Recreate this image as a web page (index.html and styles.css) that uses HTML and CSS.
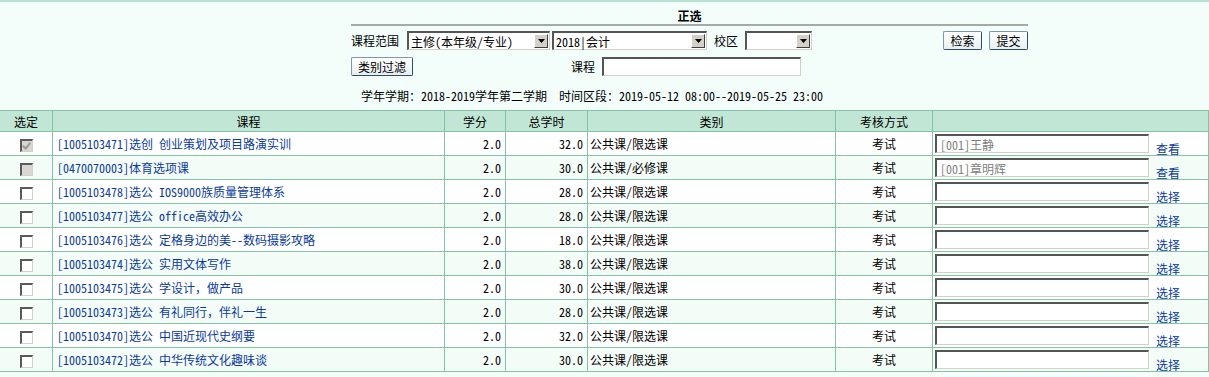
FILE: index.html
```html
<!DOCTYPE html>
<html lang="zh-CN">
<head>
    <meta charset="UTF-8">
    <title>正选</title>
    <link rel="stylesheet" href="styles.css">
</head>
<body>
    <div class="topline"></div>
    <div class="filter">
        <div class="title">正选</div>
        <div class="row">
            <span class="label">课程范围</span>
            <div class="select w1"><span class="val">主修(本年级/专业)</span><span class="arrow"><svg width="7" height="4" viewBox="0 0 7 4"><path d="M0 0h7L3.5 4z" fill="#000"/></svg></span></div>
            <div class="select w2"><span class="val">2018|会计</span><span class="arrow"><svg width="7" height="4" viewBox="0 0 7 4"><path d="M0 0h7L3.5 4z" fill="#000"/></svg></span></div>
            <span class="label campus">校区</span>
            <div class="select w3"><span class="val"></span><span class="arrow"><svg width="7" height="4" viewBox="0 0 7 4"><path d="M0 0h7L3.5 4z" fill="#000"/></svg></span></div>
            <div class="btns">
                <button class="btn">检索</button>
                <button class="btn">提交</button>
            </div>
        </div>
        <div class="row row2">
            <button class="btn filter-btn">类别过滤</button>
            <span class="label course-label">课程</span>
            <input class="text course-input" type="text">
        </div>
        <p class="term">学年学期：2018-2019学年第二学期&nbsp;&nbsp;时间区段：2019-05-12 08:00--2019-05-25 23:00</p>
    </div>

    <table class="courses">
        <thead>
            <tr>
                <th class="c-sel">选定</th>
                <th class="c-name">课程</th>
                <th class="c-credit">学分</th>
                <th class="c-hours">总学时</th>
                <th class="c-type">类别</th>
                <th class="c-exam">考核方式</th>
                <th class="c-teacher"></th>
            </tr>
        </thead>
        <tbody>
            <tr>
                <td class="center"><input type="checkbox" class="chk" checked disabled></td>
                <td><a href="#">[1005103471]选创 创业策划及项目路演实训</a></td>
                <td class="num">2.0</td>
                <td class="num">32.0</td>
                <td>公共课/限选课</td>
                <td class="center">考试</td>
                <td><div class="pick"><input class="text teacher" type="text" value="[001]王静" readonly><a href="#">查看</a></div></td>
            </tr>
            <tr>
                <td class="center"><input type="checkbox" class="chk" disabled></td>
                <td><a href="#">[0470070003]体育选项课</a></td>
                <td class="num">2.0</td>
                <td class="num">30.0</td>
                <td>公共课/必修课</td>
                <td class="center">考试</td>
                <td><div class="pick"><input class="text teacher" type="text" value="[001]章明辉" readonly><a href="#">查看</a></div></td>
            </tr>
            <tr>
                <td class="center"><input type="checkbox" class="chk"></td>
                <td><a href="#">[1005103478]选公 IOS9000族质量管理体系</a></td>
                <td class="num">2.0</td>
                <td class="num">28.0</td>
                <td>公共课/限选课</td>
                <td class="center">考试</td>
                <td><div class="pick"><input class="text teacher" type="text"><a href="#">选择</a></div></td>
            </tr>
            <tr>
                <td class="center"><input type="checkbox" class="chk"></td>
                <td><a href="#">[1005103477]选公 office高效办公</a></td>
                <td class="num">2.0</td>
                <td class="num">28.0</td>
                <td>公共课/限选课</td>
                <td class="center">考试</td>
                <td><div class="pick"><input class="text teacher" type="text"><a href="#">选择</a></div></td>
            </tr>
            <tr>
                <td class="center"><input type="checkbox" class="chk"></td>
                <td><a href="#">[1005103476]选公 定格身边的美--数码摄影攻略</a></td>
                <td class="num">2.0</td>
                <td class="num">18.0</td>
                <td>公共课/限选课</td>
                <td class="center">考试</td>
                <td><div class="pick"><input class="text teacher" type="text"><a href="#">选择</a></div></td>
            </tr>
            <tr>
                <td class="center"><input type="checkbox" class="chk"></td>
                <td><a href="#">[1005103474]选公 实用文体写作</a></td>
                <td class="num">2.0</td>
                <td class="num">38.0</td>
                <td>公共课/限选课</td>
                <td class="center">考试</td>
                <td><div class="pick"><input class="text teacher" type="text"><a href="#">选择</a></div></td>
            </tr>
            <tr>
                <td class="center"><input type="checkbox" class="chk"></td>
                <td><a href="#">[1005103475]选公 学设计，做产品</a></td>
                <td class="num">2.0</td>
                <td class="num">30.0</td>
                <td>公共课/限选课</td>
                <td class="center">考试</td>
                <td><div class="pick"><input class="text teacher" type="text"><a href="#">选择</a></div></td>
            </tr>
            <tr>
                <td class="center"><input type="checkbox" class="chk"></td>
                <td><a href="#">[1005103473]选公 有礼同行，伴礼一生</a></td>
                <td class="num">2.0</td>
                <td class="num">28.0</td>
                <td>公共课/限选课</td>
                <td class="center">考试</td>
                <td><div class="pick"><input class="text teacher" type="text"><a href="#">选择</a></div></td>
            </tr>
            <tr>
                <td class="center"><input type="checkbox" class="chk"></td>
                <td><a href="#">[1005103470]选公 中国近现代史纲要</a></td>
                <td class="num">2.0</td>
                <td class="num">32.0</td>
                <td>公共课/限选课</td>
                <td class="center">考试</td>
                <td><div class="pick"><input class="text teacher" type="text"><a href="#">选择</a></div></td>
            </tr>
            <tr>
                <td class="center"><input type="checkbox" class="chk"></td>
                <td><a href="#">[1005103472]选公 中华传统文化趣味谈</a></td>
                <td class="num">2.0</td>
                <td class="num">30.0</td>
                <td>公共课/限选课</td>
                <td class="center">考试</td>
                <td><div class="pick"><input class="text teacher" type="text"><a href="#">选择</a></div></td>
            </tr>
        </tbody>
    </table>
</body>
</html>
```

FILE: styles.css
```css
body {
    margin: 0;
    background-color: #f3fefa;
    font-family: "Noto Sans Mono CJK SC", "Noto Sans CJK SC", "DejaVu Sans Mono", monospace;
    font-size: 12px;
    color: #000;
}

.topline {
    height: 2px;
    background-color: #b6e3d1;
}

.filter {
    margin-left: 351px;
    width: 677px;
}

.title {
    height: 22px;
    line-height: 28px;
    text-align: center;
    font-weight: bold;
    border-bottom: 2px solid #a5a9a8;
}

.row {
    display: flex;
    align-items: center;
    height: 19px;
    margin-top: 5px;
}

.row2 {
    margin-top: 7px;
}

.label {
    margin-right: 8px;
}

.campus {
    margin-left: 5px;
    margin-right: 7px;
}

.select {
    display: flex;
    align-items: center;
    height: 19px;
    box-sizing: border-box;
    background: #fff;
    border-top: 2px solid #555;
    border-left: 2px solid #555;
    border-right: 1px solid #d4d0c8;
    border-bottom: 1px solid #d4d0c8;
    margin-right: 2px;
}

.select .val {
    flex: 1;
    padding-left: 2px;
    white-space: nowrap;
    overflow: hidden;
}

.select .arrow {
    width: 14px;
    height: 14px;
    box-sizing: border-box;
    background: #d4d0c8;
    border-top: 1px solid #fff;
    border-left: 1px solid #fff;
    border-right: 1px solid #404040;
    border-bottom: 1px solid #404040;
    display: flex;
    align-items: center;
    justify-content: center;
    margin-right: 1px;
}

.w1 { width: 143px; }
.w2 { width: 155px; }
.w3 { width: 67px; }

.btns {
    margin-left: auto;
    display: flex;
    gap: 7px;
}

.btn {
    font-family: inherit;
    font-size: 12px;
    width: 39px;
    height: 19px;
    padding: 0;
    background: linear-gradient(#ffffff, #e8eef0);
    border: 1px solid #7d97a3;
    border-right-color: #2b4f5f;
    border-bottom-color: #2b4f5f;
    border-radius: 2px;
    line-height: 15px;
    cursor: pointer;
}

.filter-btn {
    width: 62px;
}

.course-label {
    margin-left: 158px;
    margin-right: 7px;
}

.text {
    font-family: inherit;
    font-size: 12px;
    height: 19px;
    box-sizing: border-box;
    padding: 0 3px;
    background: #fff;
    border-top: 2px solid #555;
    border-left: 2px solid #555;
    border-right: 1px solid #d4d0c8;
    border-bottom: 1px solid #d4d0c8;
    outline: none;
}

.course-input {
    width: 199px;
}

.term {
    margin: 12px 0 0 10px;
    height: 22px;
    line-height: 16px;
}

.courses {
    width: 100%;
    border-collapse: collapse;
    table-layout: fixed;
}

.courses th {
    background-color: #c1e6d5;
    font-weight: normal;
    height: 20px;
    padding: 0;
    border: 1px solid #84c4a6;
}

.courses td {
    height: 23px;
    padding: 0 4px;
    border: 1px solid #84c4a6;
    white-space: nowrap;
}

.courses th:first-child,
.courses td:first-child {
    border-left: none;
}

.courses tbody tr:nth-child(odd) {
    background-color: #fff;
}

.courses tbody tr:nth-child(even) {
    background-color: #f3fcf7;
}

.c-sel { width: 52px; }
.c-name { width: 391px; }
.c-credit { width: 60px; }
.c-hours { width: 81px; }
.c-type { width: 247px; }
.c-exam { width: 96px; }

.center { text-align: center; }

.num {
    text-align: right;
}

.courses td:nth-child(5) {
    padding-left: 2px;
}

a {
    color: #0b3a9c;
    text-decoration: none;
}

.pick {
    display: flex;
    align-items: flex-end;
    margin-left: -2px;
}

.teacher {
    width: 214px;
    color: #808080;
}

.pick a {
    margin-left: 7px;
    line-height: 13px;
    margin-bottom: -2px;
}

.chk {
    appearance: none;
    width: 13px;
    height: 13px;
    margin: 0;
    vertical-align: middle;
    box-sizing: border-box;
    background: #fff;
    border-top: 2px solid #5a5a5a;
    border-left: 2px solid #5a5a5a;
    border-right: 1px solid #d4d0c8;
    border-bottom: 1px solid #d4d0c8;
    position: relative;
}

.chk:disabled {
    background: #d8d6d0;
}

.chk:checked::after {
    content: "";
    position: absolute;
    left: 2px;
    top: 0;
    width: 3px;
    height: 6px;
    border-right: 2px solid #9a9a9a;
    border-bottom: 2px solid #9a9a9a;
    transform: rotate(40deg);
}
```
